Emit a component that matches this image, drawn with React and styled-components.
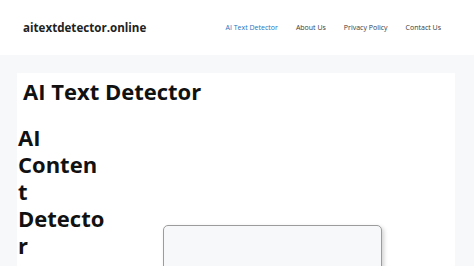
import React from "react";
import styled, { createGlobalStyle } from "styled-components";

const Global = createGlobalStyle`
  html, body { margin: 0; padding: 0; background: #f7f8f9; }
  body { font-family: "Open Sans", "Noto Sans", sans-serif; color: #222; }
  * { box-sizing: border-box; }
`;

const Header = styled.header`
  height: 55px;
  background: #fff;
  display: flex;
  align-items: center;
  justify-content: space-between;
  padding: 0 24px 0 23px;
`;

const Logo = styled.div`
  font-size: 11.6px;
  font-weight: 700;
  color: #222;
`;

const Nav = styled.nav`
  display: flex;
  align-items: center;
`;

const NavItem = styled.a`
  font-size: 7px;
  padding: 0 9px;
  color: ${(p) => (p.$active ? "#1e73be" : "#3a3a3a")};
  text-decoration: none;
`;

const Main = styled.main`
  padding: 18px 19px 0 17px;
`;

const Panel = styled.article`
  background: #fff;
  min-height: 200px;
`;

const Title = styled.h1`
  margin: 0;
  padding: 3px 6px 0 6px;
  font-size: 22px;
  line-height: 30px;
  font-weight: 700;
  color: #111;
`;

const Row = styled.div`
  display: flex;
  margin-top: 18px;
`;

const SideCol = styled.div`
  width: 88.5px;
  flex: none;
  padding-left: 1px;
`;

const BigHeading = styled.h2`
  margin: 0;
  font-size: 22px;
  line-height: 27px;
  font-weight: 700;
  color: #111;
  overflow-wrap: anywhere;
`;

const MainCol = styled.div`
  flex: 1;
  padding: 101px 0 0 57.5px;
`;

const InputBox = styled.div`
  width: 219px;
  height: 60px;
  background: #f7f8f9;
  border: 1px solid #9c9c9c;
  border-radius: 5px;
  box-shadow: 2px 2px 4px rgba(0, 0, 0, 0.18);
`;

export default function App() {
  return (
    <>
      <Global />
      <Header>
        <Logo>aitextdetector.online</Logo>
        <Nav>
          <NavItem $active>AI Text Detector</NavItem>
          <NavItem>About Us</NavItem>
          <NavItem>Privacy Policy</NavItem>
          <NavItem>Contact Us</NavItem>
        </Nav>
      </Header>
      <Main>
        <Panel>
          <Title>AI Text Detector</Title>
          <Row>
            <SideCol>
              <BigHeading>AI Content Detector</BigHeading>
            </SideCol>
            <MainCol>
              <InputBox />
            </MainCol>
          </Row>
        </Panel>
      </Main>
    </>
  );
}
